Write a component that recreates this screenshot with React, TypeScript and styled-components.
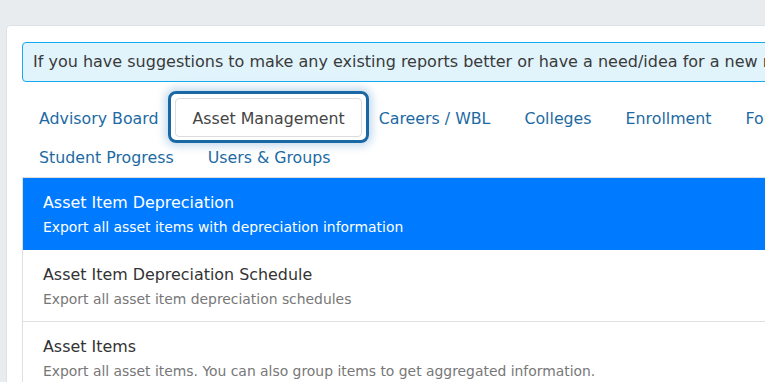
import React from "react";
import styled, { createGlobalStyle } from "styled-components";

const GlobalStyle = createGlobalStyle`
  html, body {
    margin: 0;
    padding: 0;
    background: #e9ecef;
    font-family: "DejaVu Sans", "Open Sans", sans-serif;
    overflow: hidden;
  }
`;

const Page = styled.div`
  padding: 25px 0 0 6px;
  width: 900px;
`;

const Card = styled.div`
  background: #fff;
  border: 1px solid #dee2e6;
  border-radius: 4px;
  padding: 16px 0 0 15px;
  min-height: 400px;
`;

const Alert = styled.div`
  background: #e1f4fc;
  border: 1px solid #14a9f5;
  border-radius: 4px;
  padding: 8px 10px;
  font-size: 16px;
  line-height: 22px;
  color: #3a3a3a;
  white-space: nowrap;
  overflow: hidden;
`;

const Nav = styled.div`
  display: flex;
  flex-wrap: wrap;
  margin-top: 16px;
  width: 880px;
`;

const Tab = styled.div<{ $active?: boolean }>`
  position: relative;
  padding: 9px 16px 7px;
  height: 39px;
  box-sizing: border-box;
  border: 1px solid ${(p) => (p.$active ? "#dcdcdc" : "transparent")};
  border-radius: 4px;
  font-size: 15.8px;
  line-height: 22px;
  color: ${(p) => (p.$active ? "#454545" : "#1d6aa3")};
  white-space: nowrap;
  &::after {
    content: "";
    display: ${(p) => (p.$active ? "block" : "none")};
    position: absolute;
    inset: -8px -8px -7px -8px;
    border: 3px solid #1a68a3;
    border-radius: 8px;
    box-shadow: 0 0 8px 3px rgba(120, 170, 215, 0.45);
  }
`;

const List = styled.div`
  margin-top: 1px;
  border-top: 1px solid #dfdfdf;
  border-left: 1px solid #dfdfdf;
`;

const Item = styled.div<{ $active?: boolean }>`
  padding: 13px 20px 11px 20px;
  background: ${(p) => (p.$active ? "#007bff" : "#fff")};
  border-bottom: 1px solid ${(p) => (p.$active ? "#007bff" : "#dfdfdf")};
  color: ${(p) => (p.$active ? "#fff" : "#333")};
`;

const ItemTitle = styled.div`
  font-size: 15.9px;
  line-height: 23px;
`;

const ItemDesc = styled.div<{ $active?: boolean }>`
  margin-top: 3px;
  font-size: 13.9px;
  line-height: 21px;
  color: ${(p) => (p.$active ? "#fff" : "#777")};
`;

const tabs = [
  "Advisory Board",
  "Asset Management",
  "Careers / WBL",
  "Colleges",
  "Enrollment",
  "Forms",
  "Student Progress",
  "Users & Groups",
];

const reports = [
  {
    title: "Asset Item Depreciation",
    desc: "Export all asset items with depreciation information",
  },
  {
    title: "Asset Item Depreciation Schedule",
    desc: "Export all asset item depreciation schedules",
  },
  {
    title: "Asset Items",
    desc: "Export all asset items. You can also group items to get aggregated information.",
  },
];

const App = (): JSX.Element => {
  return (
    <>
      <GlobalStyle />
      <Page>
        <Card>
          <Alert>
            If you have suggestions to make any existing reports better or have
            a need/idea for a new report, please let us know.
          </Alert>
          <Nav>
            {tabs.map((t) => (
              <Tab key={t} $active={t === "Asset Management"}>
                {t}
              </Tab>
            ))}
          </Nav>
          <List>
            {reports.map((r, i) => (
              <Item key={r.title} $active={i === 0}>
                <ItemTitle>{r.title}</ItemTitle>
                <ItemDesc $active={i === 0}>{r.desc}</ItemDesc>
              </Item>
            ))}
          </List>
        </Card>
      </Page>
    </>
  );
};

export default App;
